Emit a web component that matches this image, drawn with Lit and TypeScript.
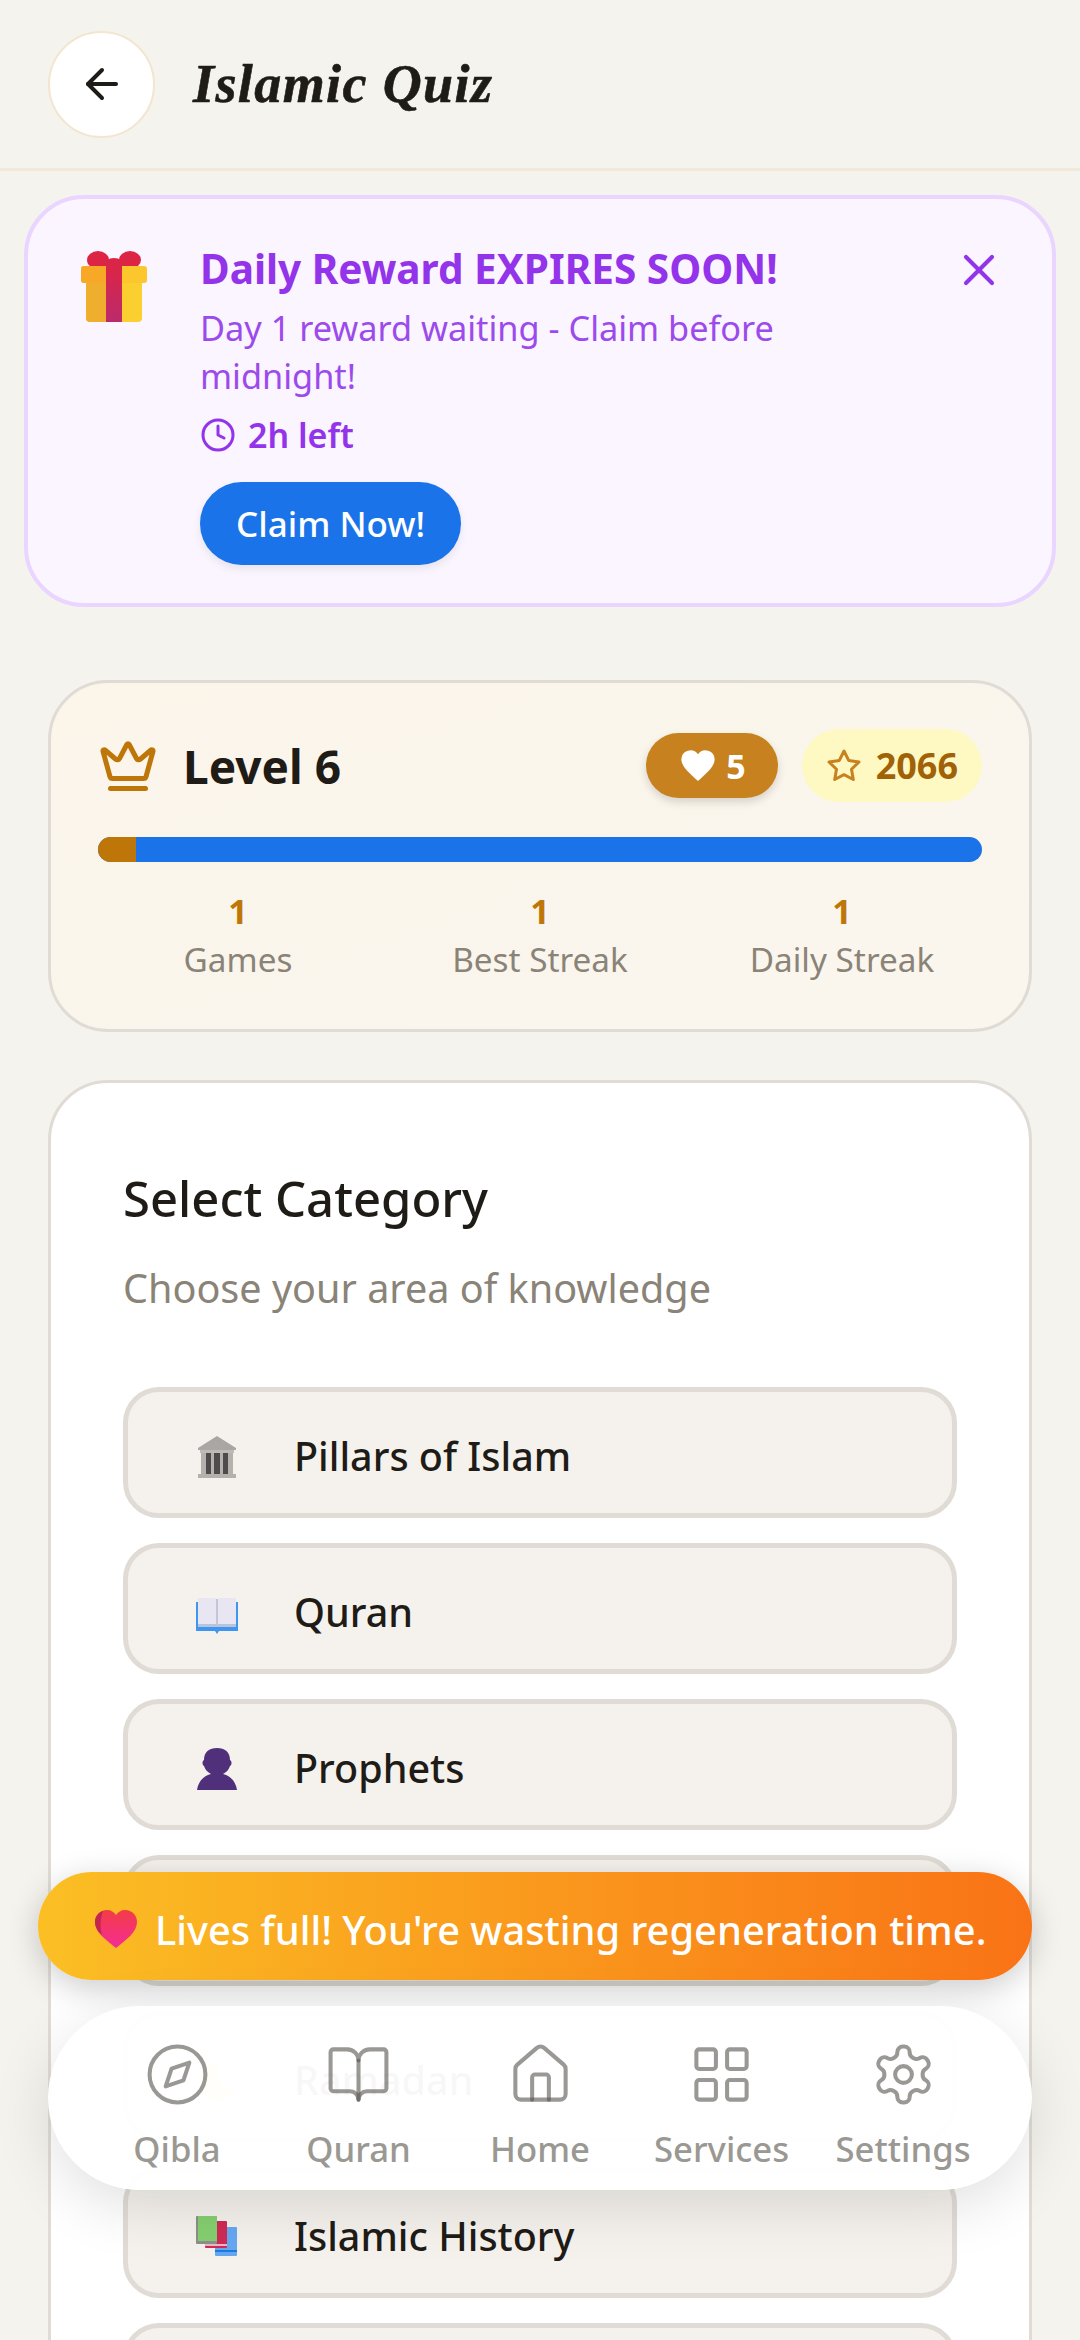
import { LitElement, html, css, svg } from "lit";
import { customElement } from "lit/decorators.js";

const giftIcon = html`<svg viewBox="0 0 66 72" width="66" height="72">
  <defs><linearGradient id="rib" x1="0" y1="0" x2="0" y2="1">
    <stop offset="0" stop-color="#dc2545" /><stop offset="1" stop-color="#bb2a6c" />
  </linearGradient></defs>
  <ellipse cx="17" cy="9" rx="11" ry="9" fill="#dc2545" />
  <ellipse cx="49" cy="9" rx="11" ry="9" fill="#dc2545" />
  <ellipse cx="33" cy="14" rx="10" ry="7" fill="#d92648" />
  <path d="M5 32h56v35a4 4 0 0 1-4 4H9a4 4 0 0 1-4-4z" fill="#fbcf2f" />
  <path d="M5 32h22v39H9a4 4 0 0 1-4-4z" fill="#f0ae2e" />
  <path d="M3 15h60a3 3 0 0 1 3 3v11a3 3 0 0 1-3 3H3a3 3 0 0 1-3-3V18a3 3 0 0 1 3-3z" fill="#fcc72c" />
  <path d="M3 15h24v17H3a3 3 0 0 1-3-3V18a3 3 0 0 1 3-3z" fill="#f8a827" />
  <rect x="25" y="14" width="16" height="57" fill="url(#rib)" />
</svg>`;

const buildingIcon = html`<svg viewBox="0 0 40 42" width="40" height="42">
  <path d="M20 0 39 12v2H1v-2z" fill="#a9a6a3" />
  <rect x="3" y="14" width="34" height="3" fill="#bebbb7" />
  <rect x="8" y="17" width="24" height="21" fill="#4f4b4c" />
  <rect x="4" y="17" width="5" height="21" fill="#b5b2ae" />
  <rect x="14" y="17" width="3" height="21" fill="#b5b2ae" />
  <rect x="23" y="17" width="3" height="21" fill="#b5b2ae" />
  <rect x="31" y="17" width="5" height="21" fill="#b5b2ae" />
  <rect x="1" y="38" width="38" height="4" fill="#b4b1ad" />
</svg>`;

const bookIcon = html`<svg viewBox="0 -6 42 42" width="42" height="42">
  <path d="M0 4h42v29H23l-2 3-2-3H0z" fill="#3f96f2" />
  <path d="M2 0h17l2 2 2-2h17v27H23l-2 2-2-2H2z" fill="#e9e6f4" />
  <rect x="2" y="26" width="38" height="3" fill="#b9c3da" />
  <rect x="20" y="1" width="2" height="26" fill="#c7c4d8" />
</svg>`;

const personIcon = html`<svg viewBox="0 0 40 42" width="40" height="42">
  <path d="M0 42c1-9 8-15 14-16-4-2-6-5-7-8-2-1-2-5 0-6 0-8 5-12 13-12s13 4 13 12c2 1 2 5 0 6-1 3-3 6-7 8 6 1 13 7 14 16z" fill="#50307a" />
</svg>`;

const moonIcon = html`<svg viewBox="0 0 42 42" width="42" height="42">
  <path d="M24 2a19 19 0 1 0 16 27A17 17 0 0 1 24 2z" fill="#f6c945" />
</svg>`;

const booksIcon = html`<svg viewBox="0 0 42 42" width="42" height="42">
  <rect x="19" y="11" width="22" height="29" rx="1" fill="#65a8f2" />
  <rect x="19" y="34" width="22" height="2" fill="#1f7ae0" />
  <rect x="9" y="5" width="22" height="27" rx="1" fill="#cf2a55" />
  <rect x="9" y="28" width="22" height="2" fill="#e8b7c8" />
  <rect x="0" y="0" width="21" height="28" rx="1" fill="#8d8f8a" />
  <rect x="2" y="0" width="19" height="25" fill="#85cf70" />
</svg>`;

const heartEmoji = html`<svg viewBox="0 0 42 38" width="42" height="38">
  <defs><linearGradient id="hrt" x1="0" y1="0" x2="0" y2="1">
    <stop offset="0" stop-color="#f23c45" /><stop offset="1" stop-color="#f62c96" />
  </linearGradient></defs>
  <path d="M21 38C10 29 0 22 0 12 0 5 5 0 12 0c4 0 7 2 9 5 2-3 5-5 9-5 7 0 12 5 12 12 0 10-10 17-21 26z" fill="url(#hrt)" />
  <path d="M8 1C3 3 0 7 0 12c0 5 3 10 7 13-2-7-2-16 1-24z" fill="#c2264f" />
</svg>`;

const navIcon = (content: unknown) => html`<svg class="nav-icon" viewBox="0 0 24 24" fill="none"
  stroke="#57534e" stroke-opacity="0.6" stroke-width="1.45" stroke-linecap="round" stroke-linejoin="round">${content}</svg>`;

const navItems = [
  {
    label: "Qibla",
    icon: svg`<circle cx="12" cy="12" r="10" /><path d="M16.24 7.76 14.12 14.12 7.76 16.24 9.88 9.88z" />`,
  },
  {
    label: "Quran",
    icon: svg`<path d="M12 7v14" /><path d="M3 18a1 1 0 0 1-1-1V4a1 1 0 0 1 1-1h5a4 4 0 0 1 4 4 4 4 0 0 1 4-4h5a1 1 0 0 1 1 1v13a1 1 0 0 1-1 1h-6a3 3 0 0 0-3 3 3 3 0 0 0-3-3z" />`,
  },
  {
    label: "Home",
    icon: svg`<path d="M15 21v-8a1 1 0 0 0-1-1h-4a1 1 0 0 0-1 1v8" /><path d="M3 10a2 2 0 0 1 .709-1.528l7-6a2 2 0 0 1 2.582 0l7 6A2 2 0 0 1 21 10v9a2 2 0 0 1-2 2H5a2 2 0 0 1-2-2z" />`,
  },
  {
    label: "Services",
    icon: svg`<rect x="3" y="3" width="7" height="7" rx="1" /><rect x="14" y="3" width="7" height="7" rx="1" /><rect x="14" y="14" width="7" height="7" rx="1" /><rect x="3" y="14" width="7" height="7" rx="1" />`,
  },
  {
    label: "Settings",
    icon: svg`<path d="M12.22 2h-.44a2 2 0 0 0-2 2v.18a2 2 0 0 1-1 1.73l-.43.25a2 2 0 0 1-2 0l-.15-.08a2 2 0 0 0-2.73.73l-.22.38a2 2 0 0 0 .73 2.73l.15.1a2 2 0 0 1 1 1.72v.51a2 2 0 0 1-1 1.74l-.15.09a2 2 0 0 0-.73 2.73l.22.38a2 2 0 0 0 2.73.73l.15-.08a2 2 0 0 1 2 0l.43.25a2 2 0 0 1 1 1.73V20a2 2 0 0 0 2 2h.44a2 2 0 0 0 2-2v-.18a2 2 0 0 1 1-1.73l.43-.25a2 2 0 0 1 2 0l.15.08a2 2 0 0 0 2.73-.73l.22-.39a2 2 0 0 0-.73-2.73l-.15-.08a2 2 0 0 1-1-1.74v-.5a2 2 0 0 1 1-1.74l.15-.09a2 2 0 0 0 .73-2.73l-.22-.38a2 2 0 0 0-2.73-.73l-.15.08a2 2 0 0 1-2 0l-.43-.25a2 2 0 0 1-1-1.73V4a2 2 0 0 0-2-2z" /><circle cx="12" cy="12" r="3" />`,
  },
];

const categories = [
  { name: "Pillars of Islam", icon: buildingIcon },
  { name: "Quran", icon: bookIcon },
  { name: "Prophets", icon: personIcon },
  { name: "Hadith", icon: bookIcon },
  { name: "Ramadan", icon: moonIcon },
  { name: "Islamic History", icon: booksIcon },
  { name: "Companions", icon: personIcon },
];

const stats = [
  { value: "1", label: "Games" },
  { value: "1", label: "Best Streak" },
  { value: "1", label: "Daily Streak" },
];

@customElement("app-root")
export class AppRoot extends LitElement {
  static styles = css`
    :host {
      display: block;
      position: relative;
      height: 2340px;
      overflow: hidden;
      background: #f5f3ee;
      font-family: "Noto Sans", "Open Sans", sans-serif;
      color: #1f1c17;
    }

    /* Header */

    .header {
      display: flex;
      align-items: center;
      gap: 38px;
      height: 171px;
      padding: 0 48px;
      box-sizing: border-box;
      border-bottom: 3px solid #f1e8d9;
    }

    .back {
      display: flex;
      align-items: center;
      justify-content: center;
      width: 107px;
      height: 107px;
      box-sizing: border-box;
      background: #fff;
      border: 2px solid #f3e5cf;
      border-radius: 50%;
    }

    .title {
      font-family: "Liberation Serif", serif;
      font-style: italic;
      font-weight: 700;
      font-size: 54px;
      letter-spacing: 1.4px;
      -webkit-text-stroke: 0.6px #1f1c17;
    }

    /* Reward banner */

    .reward {
      display: flex;
      margin: 24px 24px 0;
      padding: 43px 47px 38px 53px;
      height: 412px;
      box-sizing: border-box;
      background: #faf5ff;
      border: 4px solid #e9d5ff;
      border-radius: 60px;
      color: #9333ea;
    }

    .reward__gift {
      flex: none;
      width: 66px;
      margin: 9px 53px 0 0;
    }

    .reward__body {
      flex: 1;
      display: flex;
      flex-direction: column;
      align-items: flex-start;
    }

    .reward__title {
      font-size: 40.500px;
      font-weight: 700;
      line-height: 54px;
    }

    .reward__text {
      width: 640px;
      margin-top: 8px;
      color: #9d4aec;
      font-size: 34.300px;
      line-height: 48px;
    }

    .reward__timer {
      display: flex;
      align-items: center;
      gap: 12px;
      margin-top: 11px;
      font-size: 34px;
      font-weight: 600;
      line-height: 48px;
    }

    .reward__claim {
      margin-top: 23px;
      padding: 0 36px;
      height: 84px;
      border: none;
      border-radius: 42px;
      background: #1a73e8;
      box-shadow: 0 4px 8px rgba(0, 0, 0, 0.08);
      color: #fff;
      font: 500 35px "Noto Sans", sans-serif;
    }

    .reward__close {
      flex: none;
      margin-top: 2px;
    }

    /* Level card */

    .level {
      margin: 73px 48px 0;
      height: 352px;
      padding: 46px 47px 0;
      box-sizing: border-box;
      background: linear-gradient(160deg, #fbf5ea, #faf6ee);
      border: 3px solid #e0dcd5;
      border-radius: 60px;
    }

    .level__top {
      display: flex;
      align-items: center;
      height: 73px;
    }

    .level__name {
      margin-left: 25px;
      flex: 1;
      font-size: 46px;
      font-weight: 700;
    }

    .pill {
      display: flex;
      align-items: center;
      font-weight: 700;
    }

    .pill--lives {
      gap: 8px;
      height: 65px;
      padding: 0 32px 0 32px;
      background: #c8811f;
      border-radius: 33px;
      box-shadow: 0 4px 8px rgba(0, 0, 0, 0.15);
      color: #fff;
      font-size: 34px;
    }

    .pill--stars {
      gap: 14px;
      height: 73px;
      margin-left: 24px;
      padding: 0 24px 0 24px;
      background: #fef9c3;
      border-radius: 37px;
      color: #a16207;
      font-size: 36px;
    }

    .progress {
      height: 25px;
      margin-top: 35px;
      background: #1a73e8;
      border-radius: 13px;
      overflow: hidden;
    }

    .progress__fill {
      height: 100%;
      background: #bf7608;
    }

    .stats {
      display: grid;
      grid-template-columns: repeat(3, 1fr);
      margin: 26px -11px 0;
      text-align: center;
    }

    .stats__value {
      color: #bf7608;
      font-size: 34px;
      font-weight: 700;
      line-height: 46px;
    }

    .stats__label {
      color: #8a8377;
      font-size: 33.300px;
      line-height: 50px;
    }

    /* Categories */

    .categories {
      margin: 48px 48px 0;
      padding: 80px 72px;
      background: #fff;
      border: 3px solid #e0dcd5;
      border-radius: 60px;
    }

    .categories__title {
      margin: 0;
      font-size: 49px;
      font-weight: 500;
      line-height: 70px;
    }

    .categories__sub {
      margin: 28px 0 0;
      color: #8a8377;
      font-size: 39.600px;
      line-height: 54px;
    }

    .categories__list {
      display: flex;
      flex-direction: column;
      gap: 25px;
      margin-top: 72px;
    }

    .category {
      display: flex;
      align-items: center;
      gap: 56px;
      height: 131px;
      padding: 0 68px;
      box-sizing: border-box;
      background: #f5f2ed;
      border: 5px solid #e0dcd5;
      border-radius: 36px;
      font-size: 39.500px;
      font-weight: 500;
    }

    .category__icon {
      display: flex;
      justify-content: center;
      width: 42px;
      margin-top: 8px;
    }

    .category__name {
      padding-top: 6px;
    }

    /* Overlays */

    .toast {
      position: absolute;
      left: 38px;
      top: 1872px;
      width: 994px;
      height: 108px;
      display: flex;
      align-items: center;
      gap: 18px;
      padding: 6px 0 0 57px;
      box-sizing: border-box;
      background: linear-gradient(90deg, #fbbf24, #f97316);
      border-radius: 54px;
      box-shadow: 0 8px 32px rgba(0, 0, 0, 0.2);
      color: #fff;
      font-size: 39.800px;
      font-weight: 500;
      white-space: nowrap;
    }

    .nav {
      position: absolute;
      left: 48px;
      top: 2006px;
      width: 984px;
      height: 184px;
      display: grid;
      grid-template-columns: repeat(5, 181.500px);
      justify-content: center;
      background: rgba(255, 255, 255, 0.97);
      border-radius: 92px;
      box-shadow: 0 16px 60px rgba(0, 0, 0, 0.12);
    }

    .nav__item {
      display: flex;
      flex-direction: column;
      align-items: center;
      padding-top: 35px;
      color: #9a9893;
      font-size: 34.700px;
      font-weight: 500;
    }

    .nav-icon {
      width: 67px;
      height: 67px;
      margin-bottom: 17px;
    }
  `;

  render() {
    return html`
      <header class="header">
        <div class="back">
          <svg width="48" height="48" viewBox="0 0 24 24" fill="none" stroke="#1f1c17" stroke-width="2" stroke-linecap="round" stroke-linejoin="round">
            <path d="m12 19-7-7 7-7" /><path d="M19 12H5" />
          </svg>
        </div>
        <div class="title">Islamic Quiz</div>
      </header>

      <section class="reward">
        <div class="reward__gift">${giftIcon}</div>
        <div class="reward__body">
          <div class="reward__title">Daily Reward EXPIRES SOON!</div>
          <div class="reward__text">Day 1 reward waiting - Claim before midnight!</div>
          <div class="reward__timer">
            <svg width="36" height="36" viewBox="0 0 24 24" fill="none" stroke="currentColor" stroke-width="2" stroke-linecap="round" stroke-linejoin="round">
              <circle cx="12" cy="12" r="10" /><path d="M12 6v6l4 2" />
            </svg>
            2h left
          </div>
          <button class="reward__claim">Claim Now!</button>
        </div>
        <svg class="reward__close" width="52" height="52" viewBox="0 0 24 24" fill="none" stroke="currentColor" stroke-width="1.900" stroke-linecap="round">
          <path d="M18 6 6 18" /><path d="m6 6 12 12" />
        </svg>
      </section>

      <section class="level">
        <div class="level__top">
          <svg width="60" height="60" viewBox="0 0 24 24" fill="none" stroke="#bf7608" stroke-width="2" stroke-linecap="round" stroke-linejoin="round">
            <path d="M11.6 3.3a.5.5 0 0 1 .8 0l3 5.700a1 1 0 0 0 1.500.3l4.300-3.700a.5.5 0 0 1 .8.5l-2.800 10.200a1 1 0 0 1-1 .7H5.800a1 1 0 0 1-1-.7L2 6.100a.5.5 0 0 1 .8-.5l4.300 3.700a1 1 0 0 0 1.500-.3z" />
            <path d="M5 21h14" />
          </svg>
          <div class="level__name">Level 6</div>
          <div class="pill pill--lives">
            <svg width="40" height="40" viewBox="0 0 24 24" fill="#fff">
              <path d="M12 21C6 15.500 2 12 2 8a5.500 5.500 0 0 1 10-3.100A5.500 5.500 0 0 1 22 8c0 4-4 7.500-10 13z" />
            </svg>
            5
          </div>
          <div class="pill pill--stars">
            <svg width="36" height="36" viewBox="0 0 24 24" fill="none" stroke="#c8811f" stroke-width="2" stroke-linejoin="round">
              <path d="m12 2 3.100 6.300 6.900 1-5 4.900 1.200 6.800-6.200-3.200L5.800 21 7 14.200 2 9.300l6.900-1z" />
            </svg>
            2066
          </div>
        </div>
        <div class="progress"><div class="progress__fill" style="width: ${(38 / 883) * 100}%"></div></div>
        <div class="stats">
          ${stats.map(
            (s) => html`<div>
              <div class="stats__value">${s.value}</div>
              <div class="stats__label">${s.label}</div>
            </div>`
          )}
        </div>
      </section>

      <section class="categories">
        <h2 class="categories__title">Select Category</h2>
        <p class="categories__sub">Choose your area of knowledge</p>
        <div class="categories__list">
          ${categories.map(
            (c) => html`<div class="category">
              <span class="category__icon">${c.icon}</span>
              <span class="category__name">${c.name}</span>
            </div>`
          )}
        </div>
      </section>

      <div class="toast">${heartEmoji}<span>Lives full! You're wasting regeneration time.</span></div>

      <nav class="nav">
        ${navItems.map(
          (item) => html`<div class="nav__item">${navIcon(item.icon)}<span>${item.label}</span></div>`
        )}
      </nav>
    `;
  }
}
